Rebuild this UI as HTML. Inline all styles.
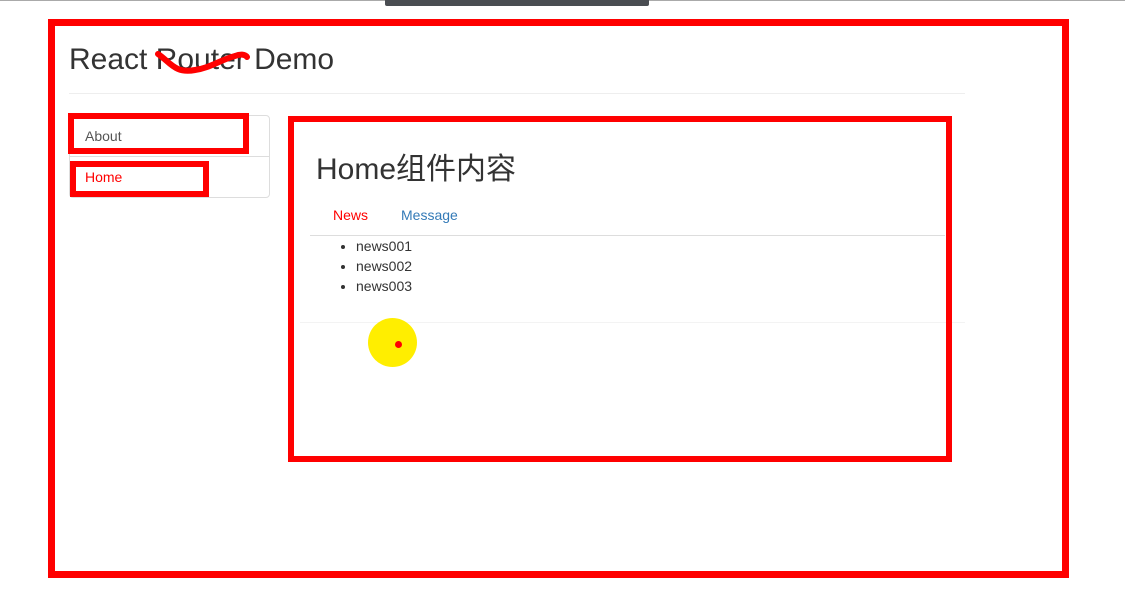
<!DOCTYPE html>
<html><head><meta charset="utf-8"><style>
*{margin:0;padding:0;box-sizing:border-box}
body{width:1125px;height:601px;background:#fff;position:relative;overflow:hidden;font-family:"Liberation Sans","Noto Sans CJK SC",sans-serif;color:#333}
.a{position:absolute}
.rb{position:absolute;border:6px solid #f00}
</style></head><body>
<div class="a" style="left:0;top:0;width:1125px;height:1px;background:#aaa"></div>
<div class="a" style="left:385px;top:0;width:264px;height:6px;background:#4a4d52;border-radius:0 0 2px 2px"></div>
<div class="rb" style="left:48px;top:19px;width:1021px;height:559px;border-width:7px"></div>
<div class="a" style="left:69px;top:43px;font-size:30px;color:#333">React Router Demo</div>
<svg class="a" style="left:150px;top:40px" width="105" height="35"><path d="M8 14 C20 22,25 34,45 30 C60 28,70 20,85 16 C90 14,95 14,97 17" stroke="#f00" stroke-width="6" fill="none" stroke-linecap="round"/></svg>
<div class="a" style="left:69px;top:93px;width:896px;height:1px;background:#eee"></div>
<div class="a" style="left:69px;top:115px;width:201px;height:83px;border:1px solid #ddd;border-radius:4px"></div>
<div class="a" style="left:69px;top:156px;width:201px;height:1px;background:#ddd"></div>
<div class="a" style="left:85px;top:128px;font-size:14px;color:#555">About</div>
<div class="a" style="left:85px;top:169px;font-size:14px;color:#f00">Home</div>
<div class="rb" style="left:68px;top:113px;width:181px;height:41px"></div>
<div class="rb" style="left:70px;top:161px;width:139px;height:36px"></div>
<div class="a" style="left:316px;top:144px;font-size:30px;color:#333">Home组件内容</div>
<div class="a" style="left:333px;top:207px;font-size:14px;color:#f00">News</div>
<div class="a" style="left:401px;top:207px;font-size:14px;color:#337ab7">Message</div>
<div class="a" style="left:310px;top:235px;width:635px;height:1px;background:#ddd"></div>
<ul class="a" style="left:356px;top:236px;font-size:14px;line-height:20px;color:#333;list-style:disc">
<li>news001</li><li>news002</li><li>news003</li></ul>
<div class="a" style="left:300px;top:322px;width:665px;height:1px;background:#f3f3f3"></div>
<div class="a" style="left:368px;top:318px;width:49px;height:49px;border-radius:50%;background:#ffee00"></div>
<div class="a" style="left:395px;top:341px;width:7px;height:7px;border-radius:50%;background:#f00"></div>
<div class="rb" style="left:288px;top:116px;width:664px;height:346px"></div>
</body></html>
